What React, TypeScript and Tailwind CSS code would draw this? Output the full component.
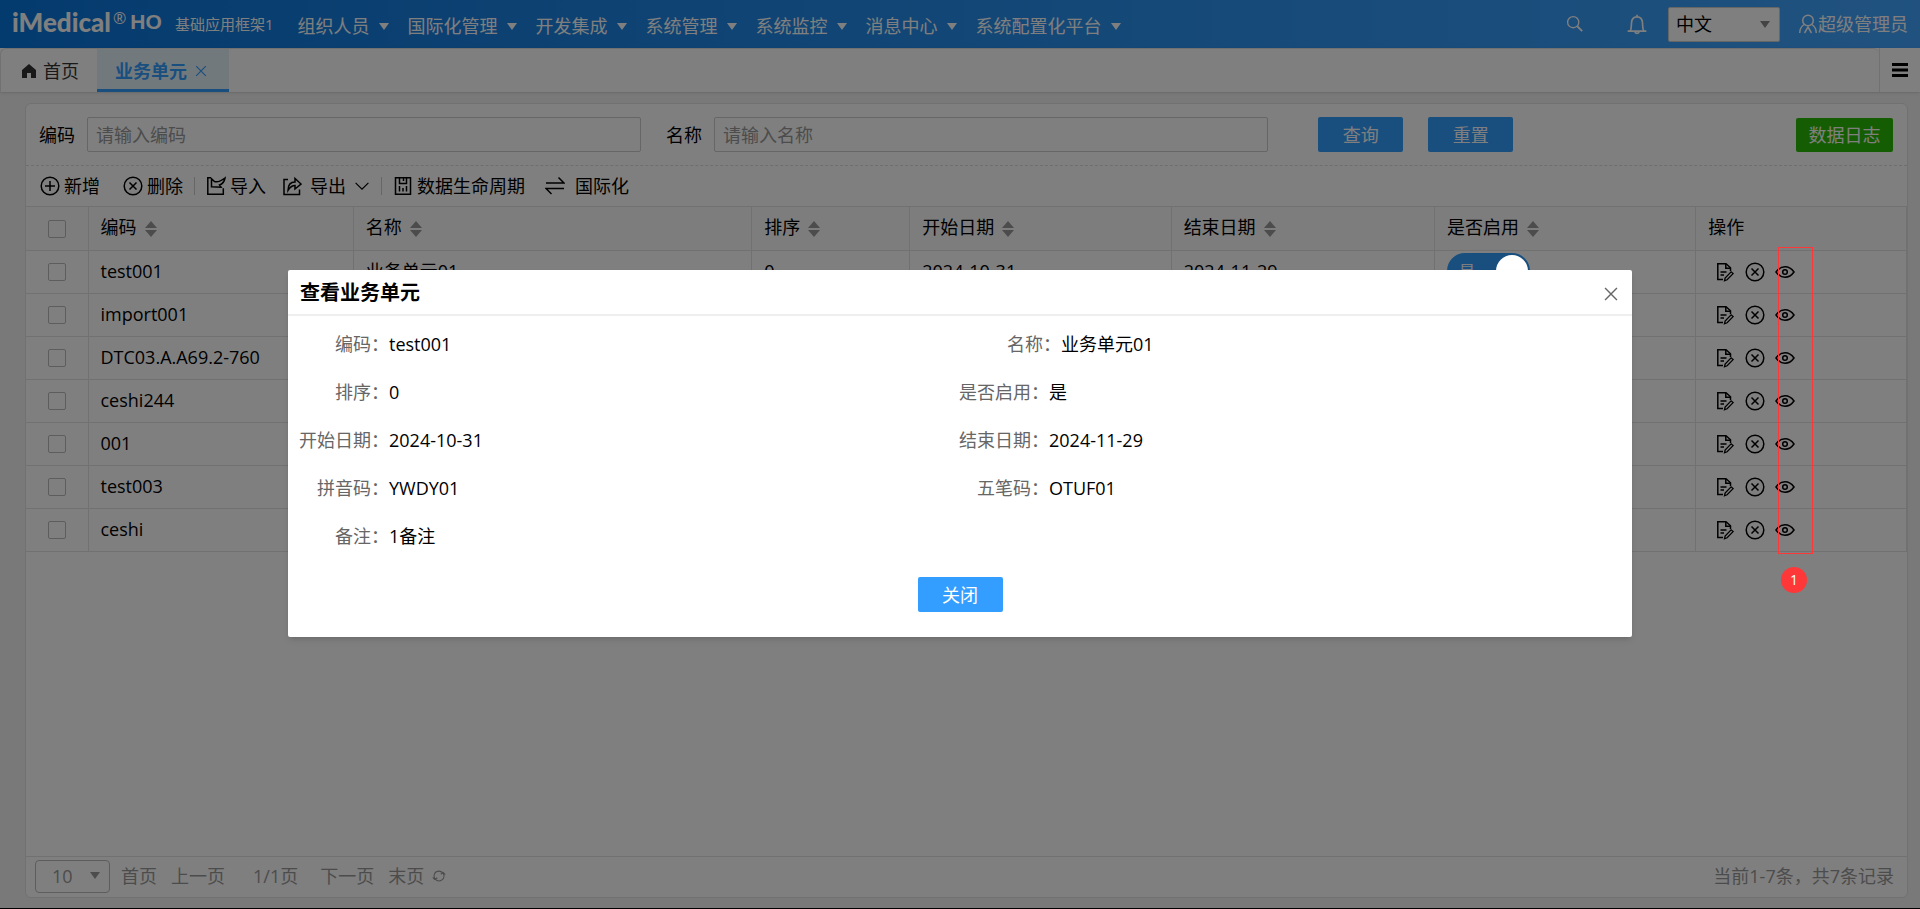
import { useState } from "react"
import type { ReactNode } from "react"

const navItems = ["组织人员", "国际化管理", "开发集成", "系统管理", "系统监控", "消息中心", "系统配置化平台"]

interface Unit {
  code: string
  name?: string
  sort?: string
  start?: string
  end?: string
  active?: boolean
}

const units: Unit[] = [
  { code: "test001", name: "业务单元01", sort: "0", start: "2024-10-31", end: "2024-11-29", active: true },
  { code: "import001" },
  { code: "DTC03.A.A69.2-760" },
  { code: "ceshi244" },
  { code: "001" },
  { code: "test003" },
  { code: "ceshi" },
]

const columns = ["编码", "名称", "排序", "开始日期", "结束日期", "是否启用"]

interface IconProps {
  className?: string
  children?: ReactNode
}

function Icon({ className, children }: IconProps) {
  return (
    <svg
      viewBox="0 0 20 20"
      fill="none"
      stroke="currentColor"
      strokeWidth="1.5"
      className={className ?? "size-5 shrink-0"}
      aria-hidden="true"
    >
      {children}
    </svg>
  )
}

function Caret({ className }: IconProps) {
  return (
    <svg viewBox="0 0 10 7" fill="currentColor" className={className} aria-hidden="true">
      <path d="M0 0h10L5 7z" />
    </svg>
  )
}

function CircleX() {
  return (
    <Icon>
      <circle cx="10" cy="10" r="8.8" />
      <path d="M6.5 6.5l7 7M13.5 6.5l-7 7" />
    </Icon>
  )
}

function CirclePlus() {
  return (
    <Icon>
      <circle cx="10" cy="10" r="8.8" />
      <path d="M10 5v10M5 10h10" />
    </Icon>
  )
}

function EditIcon() {
  return (
    <Icon>
      <path d="M8 17.5H2.8V1.8H11l4.5 4V9" />
      <path d="M10.8 2v4.3h4.7M5.5 10h6M5.5 13H9" />
      <path d="M9.5 18.8l.6-2.8 6-6.2 2 1.8-6 6.2z" strokeWidth="1.3" />
    </Icon>
  )
}

function EyeIcon() {
  return (
    <Icon>
      <path d="M1 10c2.5-3.6 5.4-5.2 9-5.2s6.5 1.6 9 5.2c-2.5 3.6-5.4 5.2-9 5.2S3.5 13.6 1 10z" />
      <circle cx="10" cy="10" r="2.3" />
    </Icon>
  )
}

function SortIcon() {
  return (
    <svg viewBox="0 0 12 16" fill="#999" className="mt-1 h-4 w-3" aria-hidden="true">
      <path d="M6 0l6 7H0zM6 16l6-7H0z" />
    </svg>
  )
}

function Header() {
  return (
    <header className="flex h-12 items-center bg-linear-to-r from-[#0876dc] via-[#2a92f0] via-60% to-[#42a5ff] pr-3 pl-3 text-white">
      <div className="flex w-[163px] shrink-0 items-end pb-1 whitespace-nowrap">
        <span className="font-['Lato'] text-[26px] leading-7 font-black">iMedical</span>
        <span className="self-start pl-0.5 text-base leading-5">®</span>
        <span className="pl-1 font-['Liberation_Sans'] text-[21px] leading-7 font-bold">HO</span>
      </div>
      <span className="shrink-0 text-[15px] leading-6">基础应用框架1</span>
      <nav className="flex items-center gap-[19px] pt-1 pl-6">
        {navItems.map((item) => (
          <a key={item} href="#" className="flex items-center gap-[9px] whitespace-nowrap">
            {item}
            <Caret className="h-[7px] w-2.5" />
          </a>
        ))}
      </nav>
      <div className="ml-auto flex items-center">
        <button type="button" aria-label="搜索" className="mr-[42px]">
          <Icon className="size-[18px]">
            <circle cx="8" cy="8" r="6.2" />
            <path d="M12.5 12.5l5.5 5.5" strokeWidth="2" />
          </Icon>
        </button>
        <button type="button" aria-label="通知" className="mr-5">
          <Icon className="size-[22px]">
            <path d="M1.5 16.5h17M3.8 16.5c1.2-2 1-4.5 1.2-7.5C5.2 5.8 7 3.5 10 3.5s4.8 2.3 5 5.5c.2 3 0 5.5 1.2 7.5M10 1.5v2M8 17c.4 2 3.6 2 4 0" />
          </Icon>
        </button>
        <div className="relative">
          <select
            aria-label="语言"
            className="h-[35px] w-28 appearance-none rounded-xs border border-[#ccc] bg-white pl-[7px] text-black"
          >
            <option>中文</option>
          </select>
          <Caret className="pointer-events-none absolute top-3.5 right-2.5 h-[7px] w-2.5 text-[#888]" />
        </div>
        <a href="#" className="flex items-center pl-[18px]">
          <Icon>
            <circle cx="10" cy="6.5" r="5.3" />
            <path d="M6.2 10.5c-3 2-4.5 4.5-4.5 8.5M13.8 10.5c3 2 4.5 4.5 4.5 8.5M6.500 19l3.500-6 3.500 6" />
          </Icon>
          超级管理员
        </a>
      </div>
    </header>
  )
}

function TabBar() {
  return (
    <div className="flex h-11 bg-white shadow-sm">
      <div className="flex flex-1 items-stretch rounded-t-md border-t border-l border-[#e2e2e2]">
        <a href="#" className="flex w-24 items-center gap-[7px] pl-[21px] text-[#333]">
          <svg viewBox="0 0 14 14" fill="currentColor" className="size-3.5" aria-hidden="true">
            <path d="M7 0l7 6v8H9V9H5v5H0V6z" />
          </svg>
          首页
        </a>
        <div className="flex w-[132px] items-center gap-2 border-b-3 border-[#339eff] bg-[#e3f3fb] pt-[3px] pl-[18px] font-bold text-[#339eff]">
          业务单元
          <button type="button" aria-label="关闭标签">
            <Icon className="size-3">
              <path d="M2 2l16 16M18 2L2 18" strokeWidth="2" />
            </Icon>
          </button>
        </div>
      </div>
      <button
        type="button"
        aria-label="菜单"
        className="flex w-[41px] items-center justify-center border-l border-[#e2e2e2] text-black"
      >
        <svg viewBox="0 0 16 14" fill="currentColor" className="h-3.5 w-4" aria-hidden="true">
          <path d="M0 0h16v3H0zM0 5.5h16v3H0zM0 11h16v3H0z" />
        </svg>
      </button>
    </div>
  )
}

function SearchBar() {
  const button = "h-[35px] w-[85px] rounded-xs bg-[#339eff] text-white"
  const input = "h-[35px] min-w-0 flex-1 rounded-xs border border-[#ccc] px-2 placeholder:text-[#999]"
  return (
    <form className="flex h-[62px] items-center border-b border-dashed border-[#ddd] pr-3.5 pl-[13px]">
      <div className="flex w-[66.3%] items-center">
        <label htmlFor="code" className="pr-3">编码</label>
        <input id="code" placeholder="请输入编码" className={input} />
        <label htmlFor="name" className="pr-3 pl-[25px]">名称</label>
        <input id="name" placeholder="请输入名称" className={input} />
      </div>
      <button type="button" className={`${button} ml-[50px]`}>查询</button>
      <button type="button" className={`${button} ml-[25px]`}>重置</button>
      <button type="button" className="ml-auto h-[34px] w-[97px] rounded-xs bg-[#28ba05] text-white">
        数据日志
      </button>
    </form>
  )
}

function Toolbar() {
  return (
    <div className="flex h-10 items-center pl-3.5">
      <button type="button" className="flex items-center gap-1">
        <CirclePlus />
        新增
      </button>
      <button type="button" className="ml-[23px] flex items-center gap-1">
        <CircleX />
        删除
      </button>
      <span className="mx-[11px] h-[18px] w-px bg-[#ccc]" />
      <button type="button" className="flex items-center gap-1">
        <Icon>
          <path d="M5 1.8H1.8v16.4h15.5v-6" />
          <path d="M19 2c-.6 3.5-2.6 6-5.5 7l1.5 2.2-9.500-.4V2.800l3 2.700C11 6.300 15 5 19 2z" />
        </Icon>
        导入
      </button>
      <button type="button" className="ml-4 flex items-center gap-2">
        <Icon>
          <path d="M6 3.5H2v15h15.5v-5" />
          <path d="M6 14.5c0-5.5 2.5-8.5 7-8.5V2.500l6 5.500-6 5V9.500c-3.500 0-5 1.500-7 5z" />
        </Icon>
        导出
        <Icon className="size-4">
          <path d="M2 6l8 8 8-8" />
        </Icon>
      </button>
      <span className="mx-[11px] h-[18px] w-px bg-[#ccc]" />
      <button type="button" className="flex items-center gap-1">
        <Icon>
          <path d="M2.5 1.8h15v16.4h-15zM6.5 2v5.5h7V2M10.5 2v3M6.5 10v5.5M10 12v3.5M13.5 10v5.5" />
        </Icon>
        数据生命周期
      </button>
      <button type="button" className="ml-5 flex items-center gap-2.5">
        <Icon>
          <path d="M1 7h18l-5.5-5.5M19 12.5H1l5.5 5.5" />
        </Icon>
        国际化
      </button>
    </div>
  )
}

function Tick({ label }: { label: string }) {
  return (
    <input
      type="checkbox"
      aria-label={label}
      className="mx-auto block size-[18px] appearance-none rounded-xs border border-[#bbb]"
    />
  )
}

function UnitTable() {
  return (
    <table className="w-full table-fixed border-collapse text-left">
      <colgroup>
        <col className="w-[62px]" />
        <col className="w-[14.1%]" />
        <col className="w-[21.2%]" />
        <col className="w-[8.4%]" />
        <col className="w-[13.9%]" />
        <col className="w-[14%]" />
        <col className="w-[13.9%]" />
        <col />
      </colgroup>
      <thead>
        <tr className="h-11 border-y border-[#e2e2e2] bg-[#fafafa]">
          <th className="border-r border-[#e2e2e2]">
            <Tick label="全选" />
          </th>
          {columns.map((column) => (
            <th key={column} className="border-r border-[#e2e2e2] pb-1 pl-3 font-normal">
              <span className="flex items-center gap-2">
                {column}
                <SortIcon />
              </span>
            </th>
          ))}
          <th className="border-r border-[#e2e2e2] pb-1 pl-3 font-normal">操作</th>
        </tr>
      </thead>
      <tbody>
        {units.map((unit) => (
          <tr key={unit.code} className="h-[43px] border-b border-[#e2e2e2]">
            <td className="border-r border-[#e2e2e2]">
              <Tick label={unit.code} />
            </td>
            <td className="border-r border-[#e2e2e2] pb-0.5 pl-3">{unit.code}</td>
            <td className="border-r border-[#e2e2e2] pb-0.5 pl-3">{unit.name}</td>
            <td className="border-r border-[#e2e2e2] pb-0.5 pl-3">{unit.sort}</td>
            <td className="border-r border-[#e2e2e2] pb-0.5 pl-3">{unit.start}</td>
            <td className="border-r border-[#e2e2e2] pb-0.5 pl-3">{unit.end}</td>
            <td className="border-r border-[#e2e2e2] pb-0.5 pl-3">
              {unit.active && (
                <button
                  type="button"
                  role="switch"
                  aria-checked="true"
                  className="flex h-9 w-[83px] items-center justify-between rounded-full bg-[#339eff] pr-0.5 pl-3 text-base text-white"
                >
                  是
                  <span className="relative z-20 size-8 rounded-full bg-white" />
                </button>
              )}
            </td>
            <td className="border-r border-[#e2e2e2] pl-[19px]">
              <div className="flex gap-2.5">
                <button type="button" aria-label="编辑"><EditIcon /></button>
                <button type="button" aria-label="删除"><CircleX /></button>
                <button type="button" aria-label="查看"><EyeIcon /></button>
              </div>
            </td>
          </tr>
        ))}
      </tbody>
    </table>
  )
}

function Pagination() {
  return (
    <div className="mt-auto flex h-[41px] items-center border-t border-[#e2e2e2] pr-[13px] pb-0.5 pl-[9px] text-[#999]">
      <div className="relative">
        <select
          aria-label="每页条数"
          className="h-[33px] w-[75px] appearance-none rounded-sm border border-[#bbb] pl-4"
        >
          <option>10</option>
        </select>
        <Caret className="pointer-events-none absolute top-3 right-2.5 h-[7px] w-2.5" />
      </div>
      <button type="button" className="ml-[11px]">首页</button>
      <button type="button" className="ml-3.5">上一页</button>
      <span className="ml-7">1/1页</span>
      <button type="button" className="ml-[22px]">下一页</button>
      <button type="button" className="ml-3.5">末页</button>
      <button type="button" aria-label="刷新" className="ml-2">
        <Icon className="size-3.5">
          <path d="M4 14C1 9 4 3 10 3c3 0 5 1.5 6.5 4M16 6c3 5 0 11-6 11-3 0-5-1.5-6.5-4M1 12l3 3 3.5-2.5M19 8l-3-3-3.5 2.5" />
        </Icon>
      </button>
      <span className="ml-auto">当前1-7条，共7条记录</span>
    </div>
  )
}

function Field({ label, children }: { label: string; children: ReactNode }) {
  return (
    <>
      <dt className="text-right text-[#666]">{label}：</dt>
      <dd>{children}</dd>
    </>
  )
}

function ViewDialog({ onClose }: { onClose: () => void }) {
  return (
    <div
      role="dialog"
      aria-labelledby="dialog-title"
      className="absolute inset-x-[15%] top-[270px] z-30 rounded-xs bg-white shadow-md"
    >
      <div className="flex h-[46px] items-center justify-between border-b-2 border-[#eee] pt-0.5 pr-3.5 pl-3">
        <h2 id="dialog-title" className="text-xl leading-6 font-bold">查看业务单元</h2>
        <button type="button" aria-label="关闭" onClick={onClose} className="pt-0.5 text-[#666]">
          <Icon className="size-3.5">
            <path d="M1.5 1.5l17 17M18.5 1.5l-17 17" strokeWidth="2" />
          </Icon>
        </button>
      </div>
      <dl className="grid auto-rows-[48px] grid-cols-[101px_1fr_101px_1fr] items-center pt-1">
        <Field label="编码">test001</Field>
        <Field label="名称">业务单元01</Field>
      </dl>
      <dl className="grid auto-rows-[48px] grid-cols-[101px_1fr_101px_1fr] items-center pr-6">
        <Field label="排序">0</Field>
        <Field label="是否启用">是</Field>
        <Field label="开始日期">2024-10-31</Field>
        <Field label="结束日期">2024-11-29</Field>
        <Field label="拼音码">YWDY01</Field>
        <Field label="五笔码">OTUF01</Field>
        <Field label="备注">1备注</Field>
      </dl>
      <div className="flex justify-center pt-[17px] pb-[25px]">
        <button type="button" onClick={onClose} className="h-[35px] w-[85px] rounded-xs bg-[#339eff] text-white">
          关闭
        </button>
      </div>
    </div>
  )
}

export default function App() {
  const [open, setOpen] = useState(true)

  return (
    <div className="relative flex min-h-screen flex-col border-b border-black bg-[#f2f2f2] font-['Open_Sans','Noto_Sans_CJK_SC',sans-serif] text-lg leading-6 text-black">
      <Header />
      <TabBar />
      <main className="flex flex-1 flex-col pt-[11px] pr-3 pb-2.5 pl-[25px]">
        <section className="flex flex-1 flex-col rounded-md border border-[#e2e2e2] bg-white">
          <SearchBar />
          <Toolbar />
          <UnitTable />
          <Pagination />
        </section>
      </main>

      {open && <div className="absolute inset-0 z-10 bg-black/50" />}
      {open && <ViewDialog onClose={() => setOpen(false)} />}

      {/* marker around the view buttons */}
      <div className="absolute top-[247px] right-[107px] z-40 h-[307px] w-[35px] border border-[#fe3838]" />
      <span className="absolute top-[567px] right-[113px] z-40 size-[26px] rounded-full bg-[#fe3838] text-center text-sm leading-[26px] text-white">
        1
      </span>
    </div>
  )
}
